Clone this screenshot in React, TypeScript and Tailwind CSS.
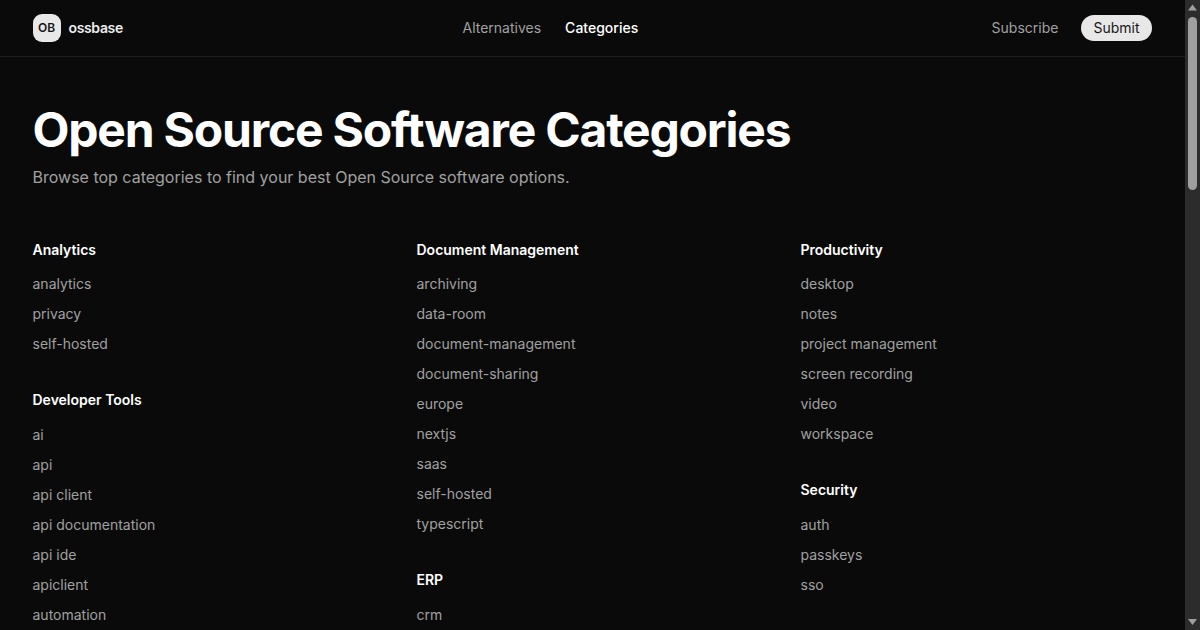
const columns = [
  [
    { title: "Analytics", items: ["analytics", "privacy", "self-hosted"] },
    {
      title: "Developer Tools",
      items: ["ai", "api", "api client", "api documentation", "api ide", "apiclient", "automation"],
    },
  ],
  [
    {
      title: "Document Management",
      items: ["archiving", "data-room", "document-management", "document-sharing", "europe", "nextjs", "saas", "self-hosted", "typescript"],
    },
    { title: "ERP", items: ["crm"] },
  ],
  [
    { title: "Productivity", items: ["desktop", "notes", "project management", "screen recording", "video", "workspace"] },
    { title: "Security", items: ["auth", "passkeys", "sso"] },
  ],
];

export default function App() {
  return (
    <div className="h-[630px] overflow-hidden flex bg-[#0a0a0a] font-['Inter',sans-serif] text-white">
      <div className="flex-1 min-w-0 overflow-hidden">
        {/* header */}
        <header className="h-[57px] border-b border-[#1d1d1d]">
          <div className="w-[1120px] h-full mx-auto flex items-center">
            <div className="w-[430px] flex items-center gap-2">
              <div className="w-[28px] h-[28px] rounded-[9px] bg-[#e8e8e8] text-[#171717] text-xs font-semibold flex items-center justify-center">
                OB
              </div>
              <span className="text-sm font-semibold tracking-tight text-[#ededed]">ossbase</span>
            </div>
            <nav className="flex gap-6 text-sm">
              <span className="text-[#a1a1a1]">Alternatives</span>
              <span className="text-white font-medium">Categories</span>
            </nav>
            <div className="ml-auto mr-[1px] flex items-center gap-[23px] text-sm">
              <span className="text-[#a1a1a1]">Subscribe</span>
              <span className="h-[26px] px-3 rounded-full bg-[#e8e8e8] text-[#171717] flex items-center">Submit</span>
            </div>
          </div>
        </header>

        <main className="w-[1120px] mx-auto">
          <h1 className="mt-[43px] text-5xl leading-[60px] font-bold tracking-tight">Open Source Software Categories</h1>
          <p className="mt-[5px] text-base leading-6 text-[#a1a1a1]">
            Browse top categories to find your best Open Source software options.
          </p>

          <div className="mt-[51px] grid grid-cols-3 gap-x-8">
            {columns.map((col, ci) => (
              <div key={`col-${ci}`} className="flex flex-col gap-[31.2px]">
                {col.map((group) => (
                  <section key={group.title}>
                    <h2 className="text-sm leading-5 font-semibold mb-[9.2px]">{group.title}</h2>
                    <ul className="flex flex-col">
                      {group.items.map((item) => (
                        <li key={item} className="text-sm leading-[30px] text-[#a1a1a1]">
                          {item}
                        </li>
                      ))}
                    </ul>
                  </section>
                ))}
              </div>
            ))}
          </div>
        </main>
      </div>

      {/* scrollbar */}
      <div className="w-[15px] h-full bg-[#2c2c2c] shrink-0 flex flex-col items-center">
        <svg className="w-[15px] h-[17px] shrink-0" viewBox="0 0 15 17">
          <path d="M7.5 4.5 L12 10.5 H3 Z" fill="#9f9f9f" />
        </svg>
        <div className="w-[9px] h-[173px] rounded-full bg-[#9f9f9f]" />
        <svg className="w-[15px] h-[17px] shrink-0 mt-auto" viewBox="0 0 15 17">
          <path d="M3 6 H12 L7.5 12 Z" fill="#9f9f9f" />
        </svg>
      </div>
    </div>
  );
}
